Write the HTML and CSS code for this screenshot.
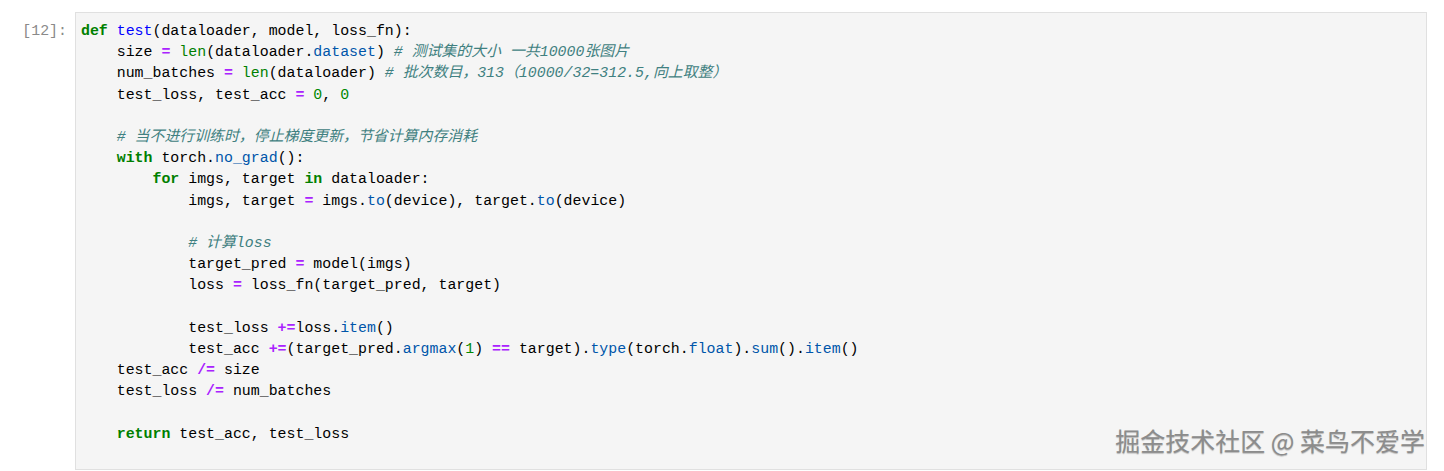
FILE: index.html
```html
<!DOCTYPE html>
<html>
<head>
<meta charset="utf-8">
<link rel="stylesheet" href="styles.css">
</head>
<body>
<div class="nb">
  <div class="row">
    <div class="prompt">[12]:</div>
    <div class="cell">
<pre class="code"><span class="k">def</span> <span class="d">test</span>(dataloader, model, loss_fn):
    size <span class="o">=</span> <span class="b">len</span>(dataloader.<span class="p">dataset</span>) <span class="c"># 测试集的大小 一共10000张图片</span>
    num_batches <span class="o">=</span> <span class="b">len</span>(dataloader) <span class="c"># 批次数目，313（10000/32=312.5,向上取整）</span>
    test_loss, test_acc <span class="o">=</span> <span class="n">0</span>, <span class="n">0</span>

    <span class="c"># 当不进行训练时，停止梯度更新，节省计算内存消耗</span>
    <span class="k">with</span> torch.<span class="p">no_grad</span>():
        <span class="k">for</span> imgs, target <span class="k">in</span> dataloader:
            imgs, target <span class="o">=</span> imgs.<span class="p">to</span>(device), target.<span class="p">to</span>(device)

            <span class="c"># 计算loss</span>
            target_pred <span class="o">=</span> model(imgs)
            loss <span class="o">=</span> loss_fn(target_pred, target)

            test_loss <span class="o">+=</span>loss.<span class="p">item</span>()
            test_acc <span class="o">+=</span>(target_pred.<span class="p">argmax</span>(<span class="n">1</span>) <span class="o">==</span> target).<span class="p">type</span>(torch.<span class="p">float</span>).<span class="p">sum</span>().<span class="p">item</span>()
    test_acc <span class="o">/=</span> size
    test_loss <span class="o">/=</span> num_batches

    <span class="k">return</span> test_acc, test_loss
</pre>
      <div class="watermark">掘金技术社区 @ 菜鸟不爱学</div>
    </div>
  </div>
</div>
</body>
</html>
```

FILE: styles.css
```css
html, body {
  margin: 0;
  padding: 0;
  background: #ffffff;
}

.nb {
  padding: 12px 17px 0 0;
}

.row {
  display: flex;
  align-items: flex-start;
  gap: 8px;
}

.prompt {
  width: 67px;
  flex: none;
  text-align: right;
  font-family: "Liberation Mono", monospace;
  font-size: 14.9px;
  line-height: 21.2px;
  color: #8a8a8a;
  padding-top: 9px;
}

.cell {
  position: relative;
  flex: 1;
  background: #f5f5f5;
  border: 1px solid #e0e0e0;
  height: 456px;
  box-sizing: content-box;
}

.code {
  margin: 0;
  padding: 8px 5px 0 5px;
  font-family: "Liberation Mono", "Noto Sans CJK SC", monospace;
  font-size: 14.9px;
  line-height: 21.2px;
  color: #000000;
}

.k { color: #008000; font-weight: bold; }
.b { color: #008000; }
.o { color: #aa22ff; font-weight: bold; }
.n { color: #008800; }
.p { color: #0055aa; }
.d { color: #0000ff; }
.c { color: #408080; font-style: italic; }

.watermark {
  position: absolute;
  right: 1px;
  bottom: 14px;
  font-family: "Noto Sans CJK SC", sans-serif;
  font-size: 25px;
  line-height: 30px;
  color: #8c8c8c;
  text-shadow: 0 1px 1px rgba(0, 0, 0, 0.25);
  white-space: nowrap;
}
```
